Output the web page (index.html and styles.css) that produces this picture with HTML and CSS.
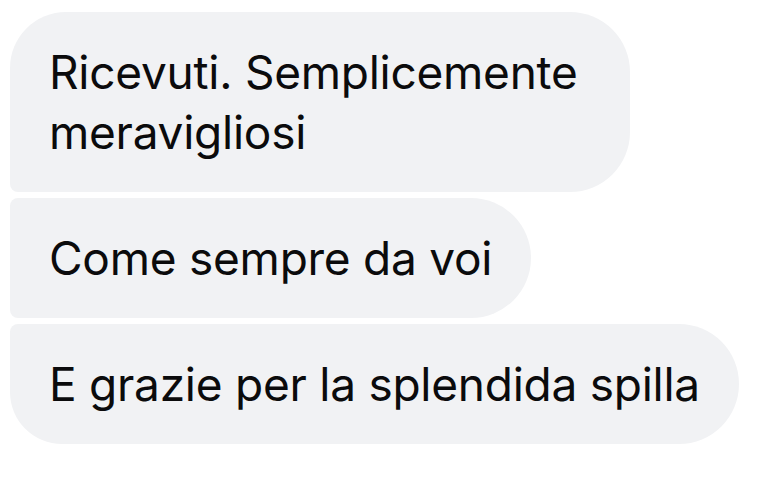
FILE: index.html
```html
<!DOCTYPE html>
<html lang="it">
<head>
<meta charset="utf-8">
<link rel="stylesheet" href="styles.css">
</head>
<body>
<div class="thread">
  <div class="bubble first">Ricevuti. Semplicemente meravigliosi</div>
  <div class="bubble middle">Come sempre da voi</div>
  <div class="bubble last">E grazie per la splendida spilla</div>
</div>
</body>
</html>
```
FILE: styles.css
```css
html, body {
  margin: 0;
  background: #ffffff;
}
body {
  padding: 12px 0 0 10px;
  font-family: Inter, "Noto Sans", sans-serif;
}
.thread {
  display: flex;
  flex-direction: column;
  align-items: flex-start;
  gap: 6px;
}
.bubble {
  box-sizing: border-box;
  padding: 30px 39px;
  background: #f1f2f4;
  color: #0b0b0c;
  font-size: 46px;
  line-height: 60px;
  letter-spacing: -0.25px;
  white-space: nowrap;
  border-radius: 8px 60px 60px 8px;
}
.first {
  width: 620px;
  white-space: normal;
  border-top-left-radius: 56px;
}
.last {
  border-bottom-left-radius: 52px;
}
```
